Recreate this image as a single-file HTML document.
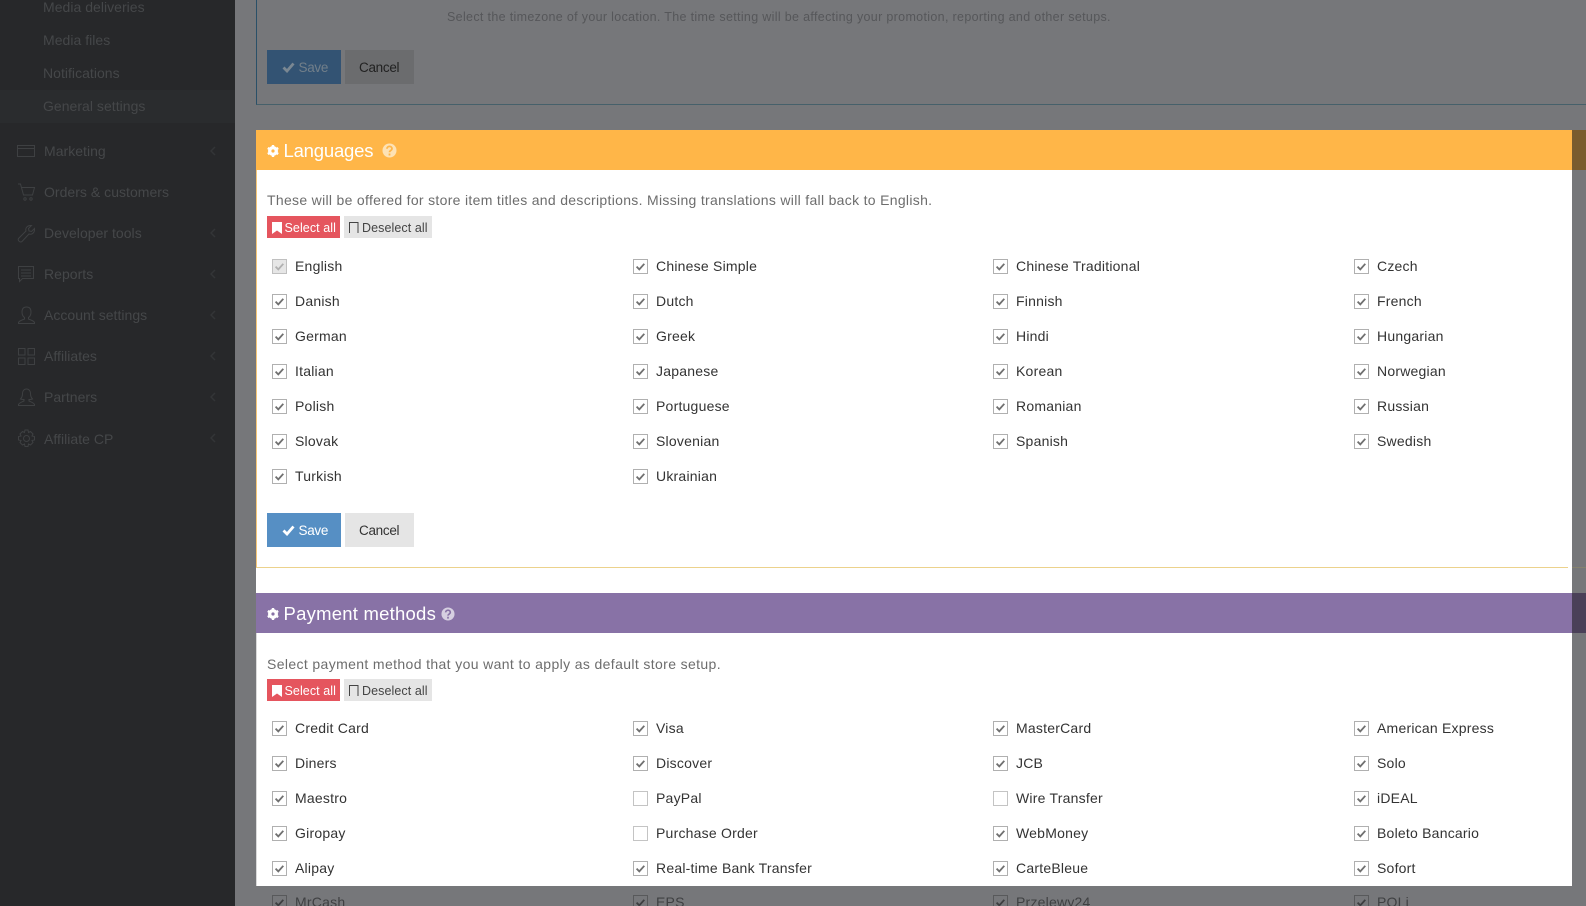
<!DOCTYPE html>
<html><head><meta charset="utf-8"><style>
html,body{margin:0;padding:0;background:#76777a}
#w{position:relative;width:1586px;height:906px;overflow:hidden;background:#76777a;font-family:"Liberation Sans",sans-serif;font-size:14px;letter-spacing:.22px;color:#333}
.a{position:absolute;white-space:nowrap}
#s{left:0;top:0;width:235px;height:906px;background:#27282a}
.n{position:absolute;white-space:nowrap;color:#454749;font-size:14px;line-height:20px;letter-spacing:.03px}
.ic{position:absolute;left:17px;width:19px;height:19px;fill:none;stroke:#3e4042;stroke-width:1}
.ch{position:absolute;left:209px;width:7px;height:10px;fill:none;stroke:#333537;stroke-width:1.5}
.btn{position:absolute;height:34px;line-height:36px;font-size:13.5px;letter-spacing:-.3px}
.btn span{position:absolute;top:0}
.btn svg{position:absolute;left:15px;top:12px}
.sm{position:absolute;height:22px;line-height:24px;font-size:12.5px;letter-spacing:.08px}
.g{position:absolute;left:272px;display:grid;grid-template-columns:361px 360px 361px 200px;grid-auto-rows:35px}
.i{position:relative;height:35px;line-height:15px;white-space:nowrap;color:#333}
.i b{font-weight:normal;position:absolute;left:23px;top:0}
.i svg{position:absolute;left:0;top:0;width:15px;height:15px}
.dm .i{color:#3f4042}
.h{color:#fff;font-size:18.500px;line-height:42px}
.d{color:#6d6d6d;font-size:14px;line-height:20px}
</style></head><body><div id="w">
<svg width="0" height="0" style="position:absolute"><defs>
<g id="on"><rect x=".5" y=".5" width="14" height="14" fill="#fff" stroke="#b0b0b0"/><path d="M3.600 7.600l2.700 2.800 5-5.600" fill="none" stroke="#707070" stroke-width="1.800"/></g>
<g id="off"><rect x=".5" y=".5" width="14" height="14" fill="#fff" stroke="#c4c4c4"/></g>
<g id="dis"><rect x=".5" y=".5" width="14" height="14" fill="#e6e6e6" stroke="#c0c0c0"/><path d="M3.600 7.600l2.700 2.800 5-5.600" fill="none" stroke="#b0b0b0" stroke-width="1.800"/></g>
<g id="ond"><rect x=".5" y=".5" width="14" height="14" fill="none" stroke="#58595b"/><path d="M3.600 7.600l2.700 2.800 5-5.600" fill="none" stroke="#3d3e40" stroke-width="1.800"/></g>
<g id="gear"><circle cx="6" cy="6" r="3.300" fill="none" stroke="#fff" stroke-width="3.400"/><path d="M6 0v2.200M6 9.800V12M.8 3l1.900 1.100M9.300 7.900l1.900 1.100M.8 9l1.900-1.100M9.300 4.100L11.200 3" stroke="#fff" stroke-width="2.400"/></g>
</defs></svg>

<!-- sidebar -->
<div class="a" id="s">
<div class="a" style="left:0;top:90px;width:235px;height:33px;background:#2a2c2e"></div>
<div class="n" style="left:43px;top:-3px">Media deliveries</div>
<div class="n" style="left:43px;top:30px">Media files</div>
<div class="n" style="left:43px;top:63px">Notifications</div>
<div class="n" style="left:43px;top:96px">General settings</div>
<div class="n" style="left:44px;top:141px">Marketing</div>
<div class="n" style="left:44px;top:182px">Orders &amp; customers</div>
<div class="n" style="left:44px;top:223px">Developer tools</div>
<div class="n" style="left:44px;top:264px">Reports</div>
<div class="n" style="left:44px;top:305px">Account settings</div>
<div class="n" style="left:44px;top:346px">Affiliates</div>
<div class="n" style="left:44px;top:387px">Partners</div>
<div class="n" style="left:44px;top:429px">Affiliate CP</div>
<svg class="ic" style="top:142px" viewBox="0 0 19 19"><rect x=".5" y="3.500" width="17" height="11"/><path d="M.5 6.500h17"/></svg>
<svg class="ic" style="top:183px" viewBox="0 0 19 19"><path d="M1 1h2.500l3 11h9l2-7.500H4.500"/><circle cx="8" cy="16" r="1.200"/><circle cx="14" cy="16" r="1.200"/></svg>
<svg class="ic" style="top:224px" viewBox="0 0 19 19"><path d="M1.500 14.500l7.500-7.500c-1-3 1.500-6 5.500-5.500l-3 3 .5 2.500 2.500.5 3-3c.5 4-2.500 6.500-5.500 5.500l-7 7.500c-2 1.500-4.500-1-3.500-3z"/></svg>
<svg class="ic" style="top:265px" viewBox="0 0 19 19"><path d="M1.500 1.500h15v12h-11l-3 3v-3h-1zM4 5h10M4 8h10M4 11h10"/></svg>
<svg class="ic" style="top:306px" viewBox="0 0 19 19"><path d="M9.500 1c-3 0-4.500 2-4.500 5 0 2.500 1 4.500 2.500 5.500v1.500c-2 1-5 1.500-6 3.500v1h16v-1c-1-2-4-2.500-6-3.500v-1.500c1.500-1 2.500-3 2.500-5.500 0-3-1.500-5-4.500-5z"/></svg>
<svg class="ic" style="top:347px" viewBox="0 0 19 19"><rect x="1.500" y="1.500" width="6.500" height="6.500"/><rect x="11" y="1.500" width="6.500" height="6.500"/><rect x="1.500" y="11" width="6.500" height="6.500"/><rect x="11" y="11" width="6.500" height="6.500"/></svg>
<svg class="ic" style="top:388px" viewBox="0 0 19 19"><path d="M9.500 1c-2.500 0-4 2-4 4.500 0 2.500-.5 4-2 5.500 1 .5 2.500.5 3.500.5v1.500c-2 1-4.500 1.500-5.500 3.500v1h16v-1c-1-2-3.500-2.500-5.500-3.500v-1.500c1 0 2.500 0 3.500-.5-1.500-1.500-2-3-2-5.500 0-2.500-1.500-4.500-4-4.500z"/></svg>
<svg class="ic" style="top:429px" viewBox="0 0 19 19"><circle cx="9.500" cy="9.500" r="3"/><path d="M8 1h3l.5 2.500 2-1 2.500 2.500-1 2 2.500.5v3.500l-2.500.5 1 2-2.500 2.500-2-1-.5 2.500h-3l-.5-2.500-2 1-2.500-2.500 1-2-2.500-.5v-3.500l2.500-.5-1-2 2.500-2.500 2 1z"/></svg>
<svg class="ch" style="top:146px" viewBox="0 0 7 10"><path d="M6 1L2 5l4 4"/></svg>
<svg class="ch" style="top:228px" viewBox="0 0 7 10"><path d="M6 1L2 5l4 4"/></svg>
<svg class="ch" style="top:269px" viewBox="0 0 7 10"><path d="M6 1L2 5l4 4"/></svg>
<svg class="ch" style="top:310px" viewBox="0 0 7 10"><path d="M6 1L2 5l4 4"/></svg>
<svg class="ch" style="top:351px" viewBox="0 0 7 10"><path d="M6 1L2 5l4 4"/></svg>
<svg class="ch" style="top:392px" viewBox="0 0 7 10"><path d="M6 1L2 5l4 4"/></svg>
<svg class="ch" style="top:433px" viewBox="0 0 7 10"><path d="M6 1L2 5l4 4"/></svg>
</div>

<!-- dimmed top panel -->
<div class="a" style="left:256px;top:0;width:1330px;height:105px;border-left:1px solid #2a5068;border-bottom:1px solid #46606a;box-sizing:border-box"></div>
<div class="a" style="left:447px;top:8px;font-size:12.500px;line-height:18px;letter-spacing:.33px;color:#56575a">Select the timezone of your location. The time setting will be affecting your promotion, reporting and other setups.</div>
<div class="btn" style="left:267px;top:50px;width:74px;background:#335373;color:#727f8a"><svg width="13" height="11" viewBox="0 0 13 11"><path d="M1.500 5.500l3.500 3.500 6.500-7.500" fill="none" stroke="#7a8792" stroke-width="2.800"/></svg><span style="left:31.500px">Save</span></div>
<div class="btn" style="left:345px;top:50px;width:69px;background:#6b6c6e;color:#222"><span style="left:14px">Cancel</span></div>

<!-- white spotlight -->
<div class="a" style="left:256px;top:130px;width:1316px;height:756px;background:#fff"></div>
<div class="a" style="left:1572px;top:130px;width:14px;height:40px;background:#7a5c2e"></div>
<div class="a" style="left:1572px;top:593px;width:14px;height:40px;background:#4a4058"></div>

<!-- Languages -->
<div class="a" style="left:256px;top:170px;width:1312px;height:398px;box-sizing:border-box;border-left:1px solid #f6c777;border-bottom:1px solid #ecd28c"></div>
<div class="a" style="left:1572px;top:567px;width:14px;height:1px;background:#85826f"></div>
<div class="a h" style="left:256px;top:130px;width:1316px;height:40px;background:#ffb648"><span class="a" style="left:27.500px;top:0;letter-spacing:-.2px">Languages</span>
<svg class="a" style="left:11px;top:15px" width="12" height="12" viewBox="0 0 12 12"><use href="#gear"/></svg>
<svg class="a" style="left:126px;top:13px" width="15" height="15" viewBox="0 0 15 15"><circle cx="7.500" cy="7.500" r="7" fill="#fde2b5"/><path d="M5 5.800c0-3.200 5-3.200 5 0 0 1.800-2.500 1.700-2.500 3.500M7.500 10.500v2" fill="none" stroke="#ffb648" stroke-width="1.800"/></svg></div>
<div class="a d" style="left:267px;top:190px;letter-spacing:.31px">These will be offered for store item titles and descriptions. Missing translations will fall back to English.</div>
<div class="sm" style="left:267px;top:216px;width:73px;background:#e5555e;color:#fff"><svg class="a" style="left:5px;top:6px" width="10" height="12" viewBox="0 0 10 12"><path d="M0 0h10v12L5 8.500 0 12z" fill="#fff"/></svg><span class="a" style="left:17.500px">Select all</span></div>
<div class="sm" style="left:344px;top:216px;width:88px;background:#e5e5e5;color:#444"><svg class="a" style="left:5px;top:6px" width="10" height="12" viewBox="0 0 10 12"><path d="M.5 11V.5h8.500V11" fill="none" stroke="#444"/></svg><span class="a" style="left:18px">Deselect all</span></div>

<div class="g" style="top:259px">
<div class="i"><svg><use href="#dis"/></svg><b>English</b></div><div class="i"><svg><use href="#on"/></svg><b>Chinese Simple</b></div><div class="i"><svg><use href="#on"/></svg><b>Chinese Traditional</b></div><div class="i"><svg><use href="#on"/></svg><b>Czech</b></div>
<div class="i"><svg><use href="#on"/></svg><b>Danish</b></div><div class="i"><svg><use href="#on"/></svg><b>Dutch</b></div><div class="i"><svg><use href="#on"/></svg><b>Finnish</b></div><div class="i"><svg><use href="#on"/></svg><b>French</b></div>
<div class="i"><svg><use href="#on"/></svg><b>German</b></div><div class="i"><svg><use href="#on"/></svg><b>Greek</b></div><div class="i"><svg><use href="#on"/></svg><b>Hindi</b></div><div class="i"><svg><use href="#on"/></svg><b>Hungarian</b></div>
<div class="i"><svg><use href="#on"/></svg><b>Italian</b></div><div class="i"><svg><use href="#on"/></svg><b>Japanese</b></div><div class="i"><svg><use href="#on"/></svg><b>Korean</b></div><div class="i"><svg><use href="#on"/></svg><b>Norwegian</b></div>
<div class="i"><svg><use href="#on"/></svg><b>Polish</b></div><div class="i"><svg><use href="#on"/></svg><b>Portuguese</b></div><div class="i"><svg><use href="#on"/></svg><b>Romanian</b></div><div class="i"><svg><use href="#on"/></svg><b>Russian</b></div>
<div class="i"><svg><use href="#on"/></svg><b>Slovak</b></div><div class="i"><svg><use href="#on"/></svg><b>Slovenian</b></div><div class="i"><svg><use href="#on"/></svg><b>Spanish</b></div><div class="i"><svg><use href="#on"/></svg><b>Swedish</b></div>
<div class="i"><svg><use href="#on"/></svg><b>Turkish</b></div><div class="i"><svg><use href="#on"/></svg><b>Ukrainian</b></div>
</div>

<div class="btn" style="left:267px;top:513px;width:74px;background:#568fc4;color:#fff"><svg width="13" height="11" viewBox="0 0 13 11"><path d="M1.500 5.500l3.500 3.500 6.500-7.500" fill="none" stroke="#fff" stroke-width="2.800"/></svg><span style="left:31.500px">Save</span></div>
<div class="btn" style="left:345px;top:513px;width:69px;background:#e5e5e5;color:#333"><span style="left:14px">Cancel</span></div>

<!-- Payment -->
<div class="a" style="left:256px;top:633px;width:1px;height:253px;background:#d9d9d9"></div>
<div class="a h" style="left:256px;top:593px;width:1316px;height:40px;background:#8872a6"><span class="a" style="left:27.500px;top:0;letter-spacing:.23px">Payment methods</span>
<svg class="a" style="left:11px;top:15px" width="12" height="12" viewBox="0 0 12 12"><use href="#gear"/></svg>
<svg class="a" style="left:185px;top:14px" width="14" height="14" viewBox="0 0 15 15"><circle cx="7.500" cy="7.500" r="7" fill="#d6cfe1"/><path d="M5 5.800c0-3.200 5-3.200 5 0 0 1.800-2.500 1.700-2.500 3.500M7.500 10.500v2" fill="none" stroke="#8872a6" stroke-width="1.800"/></svg></div>
<div class="a d" style="left:267px;top:653.500px;letter-spacing:.37px">Select payment method that you want to apply as default store setup.</div>
<div class="sm" style="left:267px;top:679px;width:73px;background:#e5555e;color:#fff"><svg class="a" style="left:5px;top:6px" width="10" height="12" viewBox="0 0 10 12"><path d="M0 0h10v12L5 8.500 0 12z" fill="#fff"/></svg><span class="a" style="left:17.500px">Select all</span></div>
<div class="sm" style="left:344px;top:679px;width:88px;background:#e5e5e5;color:#444"><svg class="a" style="left:5px;top:6px" width="10" height="12" viewBox="0 0 10 12"><path d="M.5 11V.5h8.500V11" fill="none" stroke="#444"/></svg><span class="a" style="left:18px">Deselect all</span></div>

<div class="g" style="top:721px">
<div class="i"><svg><use href="#on"/></svg><b>Credit Card</b></div><div class="i"><svg><use href="#on"/></svg><b>Visa</b></div><div class="i"><svg><use href="#on"/></svg><b>MasterCard</b></div><div class="i"><svg><use href="#on"/></svg><b>American Express</b></div>
<div class="i"><svg><use href="#on"/></svg><b>Diners</b></div><div class="i"><svg><use href="#on"/></svg><b>Discover</b></div><div class="i"><svg><use href="#on"/></svg><b>JCB</b></div><div class="i"><svg><use href="#on"/></svg><b>Solo</b></div>
<div class="i"><svg><use href="#on"/></svg><b>Maestro</b></div><div class="i"><svg><use href="#off"/></svg><b>PayPal</b></div><div class="i"><svg><use href="#off"/></svg><b>Wire Transfer</b></div><div class="i"><svg><use href="#on"/></svg><b>iDEAL</b></div>
<div class="i"><svg><use href="#on"/></svg><b>Giropay</b></div><div class="i"><svg><use href="#off"/></svg><b>Purchase Order</b></div><div class="i"><svg><use href="#on"/></svg><b>WebMoney</b></div><div class="i"><svg><use href="#on"/></svg><b>Boleto Bancario</b></div>
<div class="i"><svg><use href="#on"/></svg><b>Alipay</b></div><div class="i"><svg><use href="#on"/></svg><b>Real-time Bank Transfer</b></div><div class="i"><svg><use href="#on"/></svg><b>CarteBleue</b></div><div class="i"><svg><use href="#on"/></svg><b>Sofort</b></div>
</div>
<!-- dimmed row below the spotlight -->
<div class="g dm" style="top:895px">
<div class="i"><svg><use href="#ond"/></svg><b>MrCash</b></div><div class="i"><svg><use href="#ond"/></svg><b>EPS</b></div><div class="i"><svg><use href="#ond"/></svg><b>Przelewy24</b></div><div class="i"><svg><use href="#ond"/></svg><b>POLi</b></div>
</div>
</div></body></html>
